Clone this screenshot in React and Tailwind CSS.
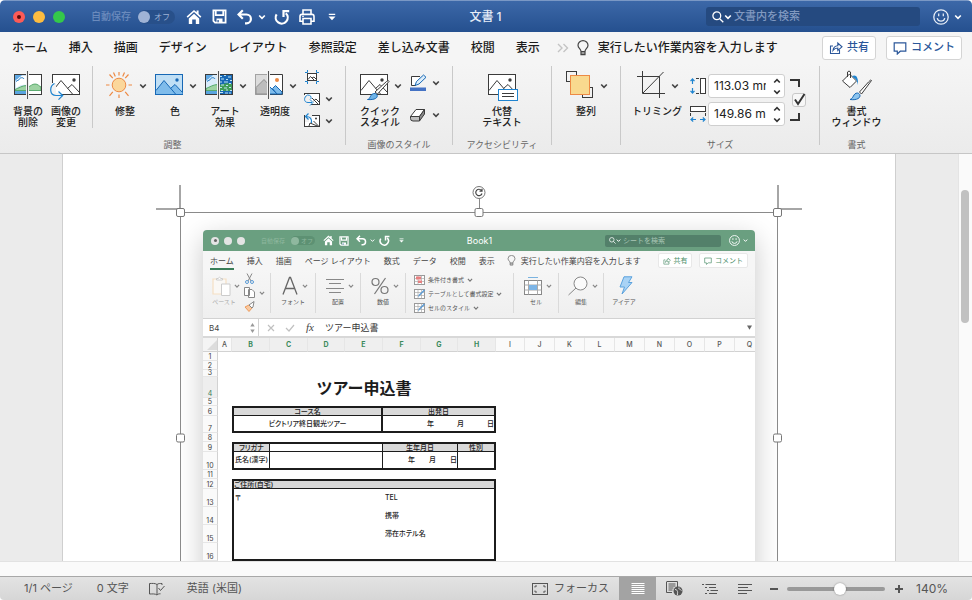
import React from "react";

const Chevron = ({ className = "size-2 text-[#444]" }) => (
  <svg viewBox="0 0 8 8" className={"shrink-0 " + className} fill="none" stroke="currentColor" strokeWidth="1.6" aria-hidden="true">
    <path d="M1.2 2.5 4 5.4l2.8-2.9" />
  </svg>
);

/* ---------- title bar icons ---------- */
const HomeIcon = ({ className }) => (
  <svg viewBox="0 0 16 16" className={className} fill="currentColor" aria-hidden="true">
    <path d="M.6 7.6 8 .9l2.6 2.3V1.6h2v3.5l2.8 2.5-1.1 1.2L8 3.1 1.7 8.8z" />
    <path d="M8 4.7 13.2 9.400V15H9.800v-4.400H6.200V15H2.800V9.400z" />
  </svg>
);
const SaveIcon = ({ className }) => (
  <svg viewBox="0 0 16 16" className={className} fill="none" stroke="currentColor" strokeWidth="1.9" aria-hidden="true">
    <path d="M1.500 1.500h13v13H3.200L1.500 12.800z" />
    <path d="M4 2v4.500h8V2" />
    <path d="M4.800 14v-3.800h6.400V14" fill="currentColor" stroke="none" />
    <path d="M6.500 11.800v2.200" stroke="#2d5896" strokeWidth="1.400" />
  </svg>
);
const UndoIcon = ({ className }) => (
  <svg viewBox="0 0 16 16" className={className} fill="none" stroke="currentColor" strokeWidth="2.200" aria-hidden="true">
    <path d="M5.800 1.200 1.500 5.500l4.300 4.300M1.800 5.500h7.700a4.400 4.400 0 0 1 0 8.800H8" />
  </svg>
);
const RedoIcon = ({ className }) => (
  <svg viewBox="0 0 16 16" className={className} fill="none" stroke="currentColor" strokeWidth="2.200" aria-hidden="true">
    <path d="M2.600 5.400a6 6 0 1 0 9.200-1.200" />
    <path d="M9.500 8V2.200h5.700" />
  </svg>
);
const PrintIcon = ({ className }) => (
  <svg viewBox="0 0 16 16" className={className} fill="none" stroke="currentColor" strokeWidth="1.6" aria-hidden="true">
    <path d="M4 5V1h8v4M3.500 12.200H1V7.500Q1 5.400 3 5.400h10q2 0 2 2.100v4.700h-2.500M4 9.500h8V15H4z" />
    <path d="M3.200 7.400h1.600" strokeWidth="1.200" />
  </svg>
);
const MoreIcon = ({ className }) => (
  <svg viewBox="0 0 8 8" className={className} fill="currentColor" aria-hidden="true">
    <path d="M.8.800h6.400v1.300H.8zM.5 3.500h7L4 7.200z" />
  </svg>
);
const SmileIcon = ({ className }) => (
  <svg viewBox="0 0 16 16" className={className} fill="none" stroke="currentColor" strokeWidth="1.300" aria-hidden="true">
    <circle cx="8" cy="8" r="7.200" />
    <path d="M5.700 4.600v2.600M10.300 4.600v2.600M4.200 9.200a3.900 3.900 0 0 0 7.600 0" />
  </svg>
);
const SearchIcon = ({ className }) => (
  <svg viewBox="0 0 12 12" className={className} fill="none" stroke="currentColor" strokeWidth="1.300" aria-hidden="true">
    <circle cx="4.800" cy="4.800" r="3.900" />
    <path d="m7.700 7.700 3.600 3.600" />
  </svg>
);
const BulbIcon = ({ className }) => (
  <svg viewBox="0 0 12 16" className={className} fill="none" stroke="currentColor" strokeWidth="1.200" aria-hidden="true">
    <path d="M4 11.500C4 9 1 8.300 1 5.200a5 4.600 0 0 1 10 0c0 3.100-3 3.800-3 6.300zM4 11.500v3.200h4v-3.200M4 13h4" />
  </svg>
);
const ShareIcon = ({ className }) => (
  <svg viewBox="0 0 14 14" className={className} fill="none" stroke="currentColor" strokeWidth="1.100" aria-hidden="true">
    <path d="M4 5H1.500v7.500h9V9" />
    <path d="M4 9.500c.3-3 2-4.700 4.800-4.800V2L13 5.800 8.800 9.500V7C6.800 7 5.200 7.800 4 9.500z" />
  </svg>
);
const CommentIcon = ({ className }) => (
  <svg viewBox="0 0 14 14" className={className} fill="none" stroke="currentColor" strokeWidth="1.200" aria-hidden="true">
    <path d="M1.200 1.800h11.600v8.400H7.300l-3 2.800v-2.800H1.200z" />
  </svg>
);

/* ---------- ribbon icons, 32 x 40 ---------- */
const Big = ({ children, w = 32 }) => (
  <svg viewBox={"0 0 " + w + " 40"} width={w} height="40" className="shrink-0" fill="none" aria-hidden="true">
    {children}
  </svg>
);
const Frame = ({ stroke = "#3b3b3b", fill = "#fff" }) => <rect x="2.500" y="8.500" width="27" height="20" fill={fill} stroke={stroke} />;
const Mountains = ({ stroke = "#3b3b3b" }) => (
  <g stroke={stroke}>
    <path d="M3 24.500 11 14.500 22.500 28M17.500 22.500 22 18.500 29.500 26.500" />
    <circle cx="24" cy="14" r="1.700" fill={stroke} stroke="none" />
  </g>
);
const RemoveBgIcon = () => (
  <Big>
    <Frame />
    <rect x="3" y="9" width="12" height="19" fill="#cfe5f7" />
    <path d="M4 15c1-3 4-3 5-5h6v9c-4-1-7 0-11 3z" fill="#fff" />
    <path d="M4 15.500c1.500-1.500 3-1 3.500-2.500S11 11 12 13" stroke="#1a76c4" />
    <path d="M3 9h7c-1 2-3 1.500-3.500 3S4 13 3 15z" fill="#60a8e3" />
    <path d="M3 23.500c4-1.500 7-4 12-4v5H3zM16 21c3-1 4-3 7-3s4 2 6 3v3.500H16z" fill="#9ed3a3" stroke="#3f9c57" strokeWidth=".8" />
    <path d="M3 25h12v3.500H3z" fill="#5aa5e0" />
    <rect x="2.500" y="8.500" width="27" height="20" stroke="#3b3b3b" />
    <path d="M15.500 5v28" stroke="#f0f0f0" strokeWidth="3" />
    <path d="M15.500 5v28" stroke="#555" />
  </Big>
);
const ChangePicIcon = () => (
  <Big>
    <Frame />
    <Mountains />
    <path d="M0 17h6v10h5v5H0z" fill="#f2f2f2" />
    <path d="M4.500 17.500C-1 20.500-.5 29.500 6 29.500h6.500M8.500 25.500l4.200 4-4.200 4.200" stroke="#1f84d0" strokeWidth="1.200" />
  </Big>
);
const SunIcon = () => (
  <Big>
    <circle cx="16" cy="19" r="6.800" fill="#fbd79b" stroke="#ed8a45" />
    <path d="M16 9.500V6M16 28.500V32M6.500 19H3M25.500 19H29M9.800 12.200 6.500 8.500M22.200 12.200l3.300-3.700M9.800 25.800l-3.300 4M22.200 25.800l3.300 4M12.300 10.600 10.500 6.500M19.700 10.600l1.800-4.100" stroke="#ed8a45" strokeWidth="1.200" />
  </Big>
);
const ColorIcon = () => (
  <Big>
    <Frame fill="#c0dff5" stroke="#1768b5" />
    <path d="M3 24.500 11 14.500 17.500 22 22 18.500l7.500 8V28H3z" fill="#7fbceb" />
    <Mountains stroke="#1768b5" />
  </Big>
);
const ArtIcon = () => (
  <Big>
    <Frame />
    <rect x="3" y="9" width="12" height="19" fill="#d9ebf9" />
    <path d="M3 9h7c-1 2-3 1.500-3.500 3S4 13 3 15z" fill="#60a8e3" />
    <path d="M4 15.500c1.500-1.500 3-1 3.500-2.500S11 11 12 13" stroke="#1a76c4" />
    <path d="M3 22.500c4-1.500 7-4 12-4v6H3z" fill="#9ed3a3" stroke="#3f9c57" strokeWidth=".8" />
    <path d="M3 25h12v3.500H3z" fill="#5aa5e0" />
    <rect x="16" y="9" width="13" height="19" fill="#1768b5" />
    <path d="M16 19c4-1 8-3 13-1v7H16z" fill="#3f9c57" />
    <path d="M17 10.500h2M21 9.500h2M25 11h3M18 13h3M23 13.500h2M27 14.500h2M17 16h2M21 16h4M26 17.500h2M18 19h3M23 19.500h2M17 21.500h2M21 22h3M26 21.500h2M18 24.500h2M23 24h2M27 24.500h2M17 26.500h3M22 27h3M26 27h2" stroke="#bfe3f2" />
    <rect x="2.500" y="8.500" width="27" height="20" stroke="#3b3b3b" />
    <path d="M15.500 5v28" stroke="#f0f0f0" strokeWidth="3" />
    <path d="M15.500 5v28" stroke="#555" />
  </Big>
);
const TransparencyIcon = () => (
  <Big>
    <rect x="2.500" y="8.500" width="13" height="20" fill="#dcdcdc" stroke="#a3a3a3" />
    <path d="M3 21.500 11 13.500l4.500 5V28H3z" fill="#bdbdbd" stroke="#8e8e8e" />
    <path d="M16 8.500h13.500v20H16" fill="#fff" stroke="#3b3b3b" />
    <path d="m16 20 8 8h-8z" fill="#7fbceb" stroke="#1768b5" />
    <path d="m19.500 22.500 3-3 6.500 6.500v2h-5z" fill="#7fbceb" stroke="#1768b5" />
    <circle cx="24" cy="14" r="2" fill="#ed8a45" />
    <path d="M15.500 5v28" stroke="#f0f0f0" strokeWidth="3" />
    <path d="M15.500 5v28" stroke="#555" />
  </Big>
);
const QuickStyleIcon = () => (
  <Big>
    <Frame />
    <Mountains />
    <path d="M31 15.500 19.500 28l-2.500-2 11.500-10.500q2.500-1.800 2.500 0z" fill="#fff" stroke="#3b3b3b" />
    <path d="M9.500 33.500c3 0 2.500-6.500 7.500-6 4 1 3.500 7-7.500 6z" fill="#6fb4e8" stroke="#1768b5" />
  </Big>
);
const AltTextIcon = () => (
  <Big w={36}>
    <g transform="translate(2 0)">
      <Frame />
      <Mountains />
      <rect x="12.500" y="23.500" width="19" height="11" fill="#fff" stroke="#1f84d0" />
      <path d="M16 27.500h12M16 30.500h12" stroke="#3b3b3b" />
    </g>
  </Big>
);
const ArrangeIcon = () => (
  <Big>
    <rect x="2.500" y="5.500" width="10" height="10" stroke="#3b3b3b" />
    <rect x="18.500" y="21.500" width="10" height="10" stroke="#3b3b3b" />
    <rect x="6.500" y="9.500" width="19" height="19" fill="#f9d98f" stroke="#ed8a45" />
  </Big>
);
const CropIcon = () => (
  <Big>
    <path d="M7.500 5v22.500H30M2 10.500h22.500V32M8 27 28.500 6" stroke="#3b3b3b" />
  </Big>
);
const FormatPaneIcon = () => (
  <Big>
    <path d="M1.500 15 8.500 8l7 7-6.500 6.500z" fill="#fff" stroke="#3b3b3b" />
    <path d="M6.500 11V6q1.500-2 3 0v6" stroke="#3b3b3b" />
    <path d="M11 10c4-2 6.500 1 6 9-1-4-1.500-6-4-7z" fill="#1f84d0" />
    <path d="M30.500 14.500 20.500 28l-2-2 9-10q2.500-3 3-1.500z" fill="#fff" stroke="#3b3b3b" />
    <path d="M9 33.500c3.500-.5 3-6.500 7.500-6.500 4.500 1 3.500 8-7.500 6.500z" fill="#8cc4ee" stroke="#1768b5" />
  </Big>
);

const CompressIcon = () => (
  <svg viewBox="0 0 16 16" className="size-4" fill="none" aria-hidden="true">
    <rect x="3.500" y="4.500" width="9" height="7" fill="#fff" stroke="#3b3b3b" />
    <path d="m4 10.500 2.500-3 4 4M8 9l2-1 2 2" stroke="#3b3b3b" />
    <path d="M1 3.500h2.500V1M15 3.500h-2.500V1M1 12.500h2.500V15M15 12.500h-2.500V15" stroke="#1f84d0" />
  </svg>
);
const SwapIcon = () => (
  <svg viewBox="0 0 16 16" className="size-4" fill="none" aria-hidden="true">
    <rect x=".5" y="2.500" width="15" height="11" fill="#fff" stroke="#3b3b3b" />
    <path d="m8 7 6.500 6.500M9.500 10 12 8l3 3" stroke="#3b3b3b" />
    <path d="M0 4h7v10H0z" fill="#f0f0f0" />
    <path d="M3.500 4C-.5 6-.5 11.500 4 11.500h4M6 8.500l3 3-3 3M3.500 4c3 0 4 1.500 3.500 4" stroke="#1f84d0" />
  </svg>
);
const ResetIcon = () => (
  <svg viewBox="0 0 16 16" className="size-4" fill="none" aria-hidden="true">
    <rect x=".5" y="2.500" width="15" height="11" fill="#fff" stroke="#3b3b3b" />
    <path d="m5 13 1-3 8.500 3.500M9.500 8l5 5" stroke="#3b3b3b" />
    <circle cx="12" cy="5.500" r="1" fill="#3b3b3b" />
    <path d="M1 1h7v5H5v3H1z" fill="#f0f0f0" />
    <path d="M4.500.5 1.500 3.500l3 3M2 3.500c4 0 6 2 5.500 6.500" stroke="#1f84d0" strokeWidth="1.200" />
  </svg>
);
const PenIcon = () => (
  <svg viewBox="0 0 20 20" className="size-5" fill="none" aria-hidden="true">
    <path d="M12 3.500H3.500v9H8" fill="#fff" stroke="#3b3b3b" />
    <path d="m7 12.500 1.500-4 7-6.500 2.500 2.300-7 6.700z" fill="#dcedfa" stroke="#1768b5" />
    <path d="M2 14.500h16V18H2z" fill="#4472c4" />
  </svg>
);
const EffectsIcon = () => (
  <svg viewBox="0 0 20 20" className="size-5" fill="none" stroke="#3b3b3b" aria-hidden="true">
    <path d="M2.500 11.500 8 4.500h8.500l-5 7z" fill="#fff" />
    <path d="M2.500 11.500h9V16H5q-2.500 0-2.500-2.500z" fill="#bdbdbd" />
    <path d="m11.500 11.500 5-7v4.500l-5 7z" fill="#8a8a8a" />
  </svg>
);
const HeightIcon = () => (
  <svg viewBox="0 0 16 16" className="size-4" fill="none" aria-hidden="true">
    <path d="M2.500 1v5M2.500 10v5M.5 3.200l2-2.200 2 2.200M.5 12.800l2 2.200 2-2.200" stroke="#1f84d0" strokeWidth="1.200" />
    <path d="M6 .5h3M6 15.500h3" stroke="#3b3b3b" />
    <rect x="10.500" y=".5" width="5" height="15" fill="#fff" stroke="#3b3b3b" />
  </svg>
);
const WidthIcon = () => (
  <svg viewBox="0 0 16 16" className="size-4" fill="none" aria-hidden="true">
    <path d="M1 13.500h5M10 13.500h5M3.200 11.500 1 13.500l2.200 2M12.800 11.500l2.200 2-2.200 2" stroke="#1f84d0" strokeWidth="1.200" />
    <path d="M.5 7v3M15.500 7v3" stroke="#3b3b3b" />
    <rect x=".5" y=".5" width="15" height="5" fill="#fff" stroke="#3b3b3b" />
  </svg>
);

/* ---------- ribbon building blocks ---------- */
const Sep = ({ short }) => <div className={short ? "h-[62px] w-px shrink-0 bg-[#c9c9c9]" : "h-[79px] w-px shrink-0 bg-[#c9c9c9]"} />;

const Tool = ({ icon, label, menu, className = "" }) => (
  <button type="button" className={"flex shrink-0 flex-col items-center text-[10px] leading-[11px] font-medium whitespace-pre text-[#222] " + (menu ? "w-[50px] " : "") + className}>
    <span className={menu ? "flex w-full items-center gap-1 pl-[3px]" : "flex"}>
      {icon}
      {menu && <Chevron />}
    </span>
    {label}
  </button>
);

const Group = ({ label, className, children }) => (
  <section className={"flex shrink-0 flex-col " + className}>
    <div className="flex h-[73px] items-start">{children}</div>
    <div className="text-center text-[9px] leading-[11px] text-[#666]">{label}</div>
  </section>
);

const SmallTool = ({ icon, label, menu, className }) => (
  <button type="button" aria-label={label} className={"flex items-center " + className}>
    {icon}
    {menu && <Chevron />}
  </button>
);

const SizeField = ({ label, icon, value }) => (
  <div className="flex items-center gap-[2px]">
    {icon}
    <div className="flex h-6 w-[77px] items-center rounded-[3px] border border-[#cfcfcf] bg-white pl-[5px]">
      <input aria-label={label} defaultValue={value} className="w-[52px] min-w-0 bg-transparent text-xs text-[#222] outline-none" />
      <div className="ml-[7px] flex flex-col">
        <button type="button" aria-label={label + "を増やす"} className="flex h-[11px] items-center">
          <Chevron className="size-2 rotate-180 text-[#333]" />
        </button>
        <button type="button" aria-label={label + "を減らす"} className="flex h-[11px] items-center">
          <Chevron className="size-2 text-[#333]" />
        </button>
      </div>
    </div>
  </div>
);

const TitleBar = () => (
  <header className="flex h-8 shrink-0 items-center border-t border-[#7a98c5] bg-gradient-to-b from-[#3c68a8] to-[#25508f] text-white">
    <div className="flex flex-1 basis-0 items-center pl-[13px]">
      <div className="flex gap-2">
        <button type="button" aria-label="閉じる" className="flex size-3 items-center justify-center rounded-full bg-[#fc5b57]">
          <span className="size-1 rounded-full bg-[#5c0b09]" />
        </button>
        <button type="button" aria-label="しまう" className="size-3 rounded-full bg-[#fdbc40]" />
        <button type="button" aria-label="拡大" className="size-3 rounded-full bg-[#34c84a]" />
      </div>
      <span className="ml-[26px] text-[10px] font-medium text-[#6b8bbd]">自動保存</span>
      <button type="button" role="switch" aria-checked="false" className="ml-[7px] flex h-[14px] w-[37px] items-center gap-1 rounded-full bg-[#28508a] text-[8px] text-[#9db3d6]">
        <span className="size-3 rounded-full bg-[#9fb3d6]" />
        オフ
      </button>
      <button type="button" aria-label="ホーム" className="ml-[11px]"><HomeIcon className="size-4" /></button>
      <button type="button" aria-label="保存" className="ml-[10px]"><SaveIcon className="size-[15px]" /></button>
      <button type="button" aria-label="元に戻す" className="ml-[10px] flex items-center gap-[5px]">
        <UndoIcon className="size-4" />
        <Chevron className="size-2 text-white" />
      </button>
      <button type="button" aria-label="やり直し" className="ml-2"><RedoIcon className="size-4" /></button>
      <button type="button" aria-label="印刷" className="ml-[9px]"><PrintIcon className="size-4" /></button>
      <button type="button" aria-label="カスタマイズ" className="ml-[13px]"><MoreIcon className="size-2" /></button>
    </div>
    <h1 className="pr-1 text-xs font-medium text-[#e6edf7]">文書 1</h1>
    <div className="flex flex-1 basis-0 items-center justify-end pr-[10px]">
      <label className="flex h-[19px] w-[214px] items-center rounded-[3px] bg-[#254a80] pl-[6px]">
        <SearchIcon className="size-3" />
        <Chevron className="size-2 text-white" />
        <input aria-label="文書内を検索" placeholder="文書内を検索" className="ml-[2px] min-w-0 flex-1 bg-transparent text-[11px] font-medium outline-none placeholder:text-[#8199c0]" />
      </label>
      <button type="button" aria-label="フィードバック" className="ml-[13px] flex items-center gap-[5px] text-[#e6edf7]">
        <SmileIcon className="size-4" />
        <Chevron className="size-2 text-white" />
      </button>
    </div>
  </header>
);

const tabs = ["ホーム", "挿入", "描画", "デザイン", "レイアウト", "参照設定", "差し込み文書", "校閲", "表示"];

const TabRow = () => (
  <nav className="flex h-[31px] shrink-0 items-center bg-[#f5f5f5] pr-[10px] pl-3 text-xs font-medium text-[#1c1c1c]">
    <div className="flex gap-[21px] whitespace-nowrap">
      {tabs.map((t) => (
        <button key={t} type="button">{t}</button>
      ))}
    </div>
    <button type="button" aria-label="その他のタブ" className="ml-[17px] text-[#c4c4c4]">
      <svg viewBox="0 0 12 10" className="h-[10px] w-3" fill="none" stroke="currentColor" strokeWidth="1.400" aria-hidden="true">
        <path d="m1 1 4 4-4 4M6.500 1l4 4-4 4" />
      </svg>
    </button>
    <button type="button" className="ml-2 flex items-center gap-[9px] whitespace-nowrap">
      <BulbIcon className="h-4 w-3 text-[#444]" />
      実行したい作業内容を入力します
    </button>
    <div className="ml-auto flex gap-[10px] text-[11px] whitespace-nowrap text-[#2b579a]">
      <button type="button" className="flex h-6 w-[54px] items-center justify-center gap-1 rounded-[3px] border border-[#d4d4d4] bg-white">
        <ShareIcon className="size-[14px]" />
        共有
      </button>
      <button type="button" className="flex h-6 w-[76px] items-center justify-center gap-1 rounded-[3px] border border-[#d4d4d4] bg-white">
        <CommentIcon className="size-[14px]" />
        コメント
      </button>
    </div>
  </nav>
);

const Ribbon = () => (
  <div className="flex h-[91px] shrink-0 items-start overflow-hidden border-b border-[#c6c6c6] bg-gradient-to-b from-[#f5f5f5] to-[#ebebeb] pt-[3px]">
    <Group label="調整" className="w-[345px]">
      <Tool className="ml-[9px] w-[38px]" icon={<RemoveBgIcon />} label={"背景の\n削除"} />
      <Tool className="w-[38px]" icon={<ChangePicIcon />} label={"画像の\n変更"} />
      <div className="mx-[7px]"><Sep short /></div>
      <Tool menu icon={<SunIcon />} label="修整" />
      <Tool menu icon={<ColorIcon />} label="色" />
      <Tool menu icon={<ArtIcon />} label={"アート\n効果"} />
      <Tool menu icon={<TransparencyIcon />} label="透明度" />
      <div className="ml-1 flex flex-col">
        <SmallTool className="h-[22px]" icon={<CompressIcon />} label="図の圧縮" />
        <SmallTool className="h-[22px] gap-[5px]" menu icon={<SwapIcon />} label="図の変更" />
        <SmallTool className="h-[22px] gap-[5px]" menu icon={<ResetIcon />} label="図のリセット" />
      </div>
    </Group>
    <Sep />
    <Group label="画像のスタイル" className="w-[106px]">
      <Tool menu className="ml-[9px]" icon={<QuickStyleIcon />} label={"クイック\nスタイル"} />
      <div className="ml-[3px] flex flex-col pt-px">
        <SmallTool className="h-8 gap-1" menu icon={<PenIcon />} label="図の枠線" />
        <SmallTool className="h-8 gap-1" menu icon={<EffectsIcon />} label="図の効果" />
      </div>
    </Group>
    <Sep />
    <Group label="アクセシビリティ" className="w-[98px]">
      <Tool className="mx-auto" icon={<AltTextIcon />} label={"代替\nテキスト"} />
    </Group>
    <Sep />
    <Group label="" className="w-[68px]">
      <Tool menu className="ml-[9px]" icon={<ArrangeIcon />} label="整列" />
    </Group>
    <Sep />
    <Group label="サイズ" className="w-[198px]">
      <Tool menu className="ml-[11px]" icon={<CropIcon />} label="トリミング" />
      <div className="ml-2 flex flex-col gap-1 pt-2">
        <SizeField label="高さ" icon={<HeightIcon />} value="113.03 mm" />
        <SizeField label="幅" icon={<WidthIcon />} value="149.86 mm" />
      </div>
      <div className="ml-[5px] flex flex-col items-start pt-[13px]">
        <span className="h-2 w-[10px] border-t-2 border-r-2 border-[#333]" />
        <label className="relative mt-[6px] mb-[6px] ml-[2px] block size-[14px]">
          <input type="checkbox" defaultChecked aria-label="縦横比を固定" className="block size-[14px] appearance-none rounded-[3px] border border-[#c8c8c8] bg-[#f7f7f7]" />
          <svg viewBox="0 0 14 14" className="pointer-events-none absolute inset-0" fill="none" stroke="#333" strokeWidth="2" aria-hidden="true">
            <path d="m3 6.500 3 4.500 6.500-10" />
          </svg>
        </label>
        <span className="h-2 w-[10px] border-r-2 border-b-2 border-[#333]" />
      </div>
    </Group>
    <Sep />
    <Group label="書式" className="w-[73px]">
      <Tool className="mx-auto" icon={<FormatPaneIcon />} label={"書式\nウィンドウ"} />
    </Group>
  </div>
);

/* ---------- embedded spreadsheet window ---------- */
const MiniSep = () => <div className="h-10 w-px shrink-0 bg-[#dadada]" />;
const MiniTool = ({ icon, label, menu = true, className = "w-11" }) => (
  <button type="button" className={"flex shrink-0 flex-col items-center text-[6px] leading-[8px] text-[#555] " + className}>
    <span className="flex h-[25px] items-center gap-1 pl-1">
      {icon}
      {menu && <Chevron className="size-[6px] text-[#888]" />}
    </span>
    {label}
  </button>
);
const MiniGrid = ({ accent, fill }) => (
  <svg viewBox="0 0 11 10" className="h-[10px] w-[11px]" fill="none" aria-hidden="true">
    <rect x=".5" y=".5" width="10" height="9" fill="#fff" stroke="#999" />
    <path d="M.5 3.500h10M.5 6.500h10M4 .5v9M7.500.5v9" stroke="#aaa" strokeWidth=".7" />
    <path d={accent === "rule" ? "M2 1.500h5v3H2zM4 5.500h4v2.500H4z" : "m4 8.500 1-3 5-5 1 1-5 5z"} fill={fill} />
  </svg>
);

const MiniTitle = () => (
  <div className="flex h-[21px] items-center bg-[#6a9f80] text-white">
    <div className="flex flex-1 basis-0 items-center pl-2">
      <div className="flex gap-[5px]">
        <span className="flex size-2 items-center justify-center rounded-full bg-[#e4e4e4]"><span className="size-[3px] rounded-full bg-[#666]" /></span>
        <span className="size-2 rounded-full bg-[#e4e4e4]" />
        <span className="size-2 rounded-full bg-[#e4e4e4]" />
      </div>
      <span className="ml-4 text-[6px] text-[#8fb89f]">自動保存</span>
      <span className="ml-[6px] flex h-[9px] w-6 items-center gap-[2px] rounded-full bg-[#5d9173] text-[6px] text-[#8fb89f]">
        <span className="size-2 rounded-full bg-[#8fb89f]" />オフ
      </span>
      <HomeIcon className="ml-2 size-[11px]" />
      <SaveIcon className="ml-[5px] size-[10px]" />
      <UndoIcon className="ml-[7px] size-[11px]" />
      <Chevron className="ml-[3px] size-[5px] text-white" />
      <RedoIcon className="ml-1 size-[11px]" />
      <MoreIcon className="ml-[9px] size-[5px]" />
    </div>
    <span className="text-[9px] leading-none">Book1</span>
    <div className="flex flex-1 basis-0 items-center justify-end pr-[7px]">
      <label className="flex h-3 w-[116px] items-center rounded-[2px] bg-[#53806a] pl-1">
        <SearchIcon className="size-[7px]" />
        <Chevron className="size-[5px] text-white" />
        <input aria-label="シートを検索" placeholder="シートを検索" className="ml-[2px] h-3 min-w-0 flex-1 bg-transparent text-[7px] leading-[12px] outline-none placeholder:text-[#a9c6b5]" />
      </label>
      <SmileIcon className="ml-2 size-[11px]" />
      <Chevron className="ml-[3px] size-[5px] text-white" />
    </div>
  </div>
);

const miniTabs = ["挿入", "描画", "ページ レイアウト", "数式", "データ", "校閲", "表示"];

const MiniTabs = () => (
  <div className="flex h-[19px] items-center bg-[#f6f6f6] pr-[7px] pl-[7px] text-[8px] leading-none whitespace-nowrap text-[#444]">
    <div className="flex gap-[13px]">
      <button type="button" className="border-b-2 border-[#3a7d58] pt-[5px] pb-[3px]">ホーム</button>
      {miniTabs.map((t) => (
        <button key={t} type="button">{t}</button>
      ))}
    </div>
    <BulbIcon className="ml-3 h-[11px] w-[9px] text-[#777]" />
    <span className="ml-[5px]">実行したい作業内容を入力します</span>
    <div className="ml-auto flex gap-[7px] text-[7px] text-[#4e8f6b]">
      <button type="button" className="flex h-[15px] w-[34px] items-center justify-center gap-[3px] rounded-[2px] border border-[#e8e8e8] bg-white"><ShareIcon className="size-2" />共有</button>
      <button type="button" className="flex h-[15px] w-[49px] items-center justify-center gap-[3px] rounded-[2px] border border-[#e8e8e8] bg-white"><CommentIcon className="size-2" />コメント</button>
    </div>
  </div>
);

const MiniRibbon = () => (
  <div className="flex h-[49px] items-start border-b border-[#d2d2d2] bg-gradient-to-b from-[#f6f6f6] to-[#efefef] pt-[3px]">
    <div className="flex w-[67px] shrink-0">
      <button type="button" className="ml-[7px] flex w-7 flex-col items-center text-[6px] leading-[8px] text-[#aaa]">
        <span className="flex h-[25px] items-center gap-[3px] pl-1">
          <svg viewBox="0 0 19 20" className="h-5 w-[19px]" fill="none" aria-hidden="true">
            <path d="M1 3h13v15H1z" fill="#faf8f5" stroke="#f5dfc4" strokeWidth="1.200" />
            <path d="M4.500 4V2.500h1.500q1.500-2.500 3 0h1.500V4z" fill="#fff" stroke="#ccc" />
            <path d="M9.500 8h8.500v11.500H9.500z" fill="#fff" stroke="#ccc" />
          </svg>
          <Chevron className="size-[6px] text-[#888]" />
        </span>
        ペースト
      </button>
      <div className="ml-[6px] flex flex-col gap-[3px]">
        <svg viewBox="0 0 11 11" className="size-[11px]" fill="none" aria-hidden="true">
          <path d="m3 .5 4 7.500M8 .5 4 8" stroke="#888" />
          <circle cx="3" cy="9" r="1.500" stroke="#5b9bd5" />
          <circle cx="8" cy="9" r="1.500" stroke="#5b9bd5" />
        </svg>
        <span className="flex items-center gap-1">
          <svg viewBox="0 0 11 11" className="size-[11px]" fill="#fff" stroke="#888" aria-hidden="true">
            <path d="M.5.500h5v8h-5zM4.500 2.500H8l2.500 2.500v5.500h-6z" />
          </svg>
          <Chevron className="size-[6px] text-[#888]" />
        </span>
        <svg viewBox="0 0 11 11" className="size-[11px]" fill="none" aria-hidden="true">
          <path d="m1 6 4-2 3 3-3 3.500z" fill="#f9c9a0" stroke="#ed9a5a" />
          <path d="M5 4 10 .5 9 6 8 7z" fill="#fff" stroke="#888" />
        </svg>
      </div>
    </div>
    <MiniSep />
    <MiniTool label="フォント" icon={<svg viewBox="0 0 16 20" className="h-5 w-4" fill="none" stroke="#666" strokeWidth="1.300" aria-hidden="true"><path d="M1 18.500 7.500 1.500h1L15 18.500M3.500 12.500h9" /></svg>} />
    <MiniSep />
    <MiniTool label="配置" icon={<svg viewBox="0 0 18 16" className="h-4 w-[18px]" fill="none" stroke="#888" aria-hidden="true"><path d="M0 1.500h18M3 5.500h12M0 10.500h18M3 14.500h12" /></svg>} />
    <MiniSep />
    <MiniTool label="数値" icon={<svg viewBox="0 0 18 18" className="size-[18px]" fill="none" stroke="#777" strokeWidth="1.200" aria-hidden="true"><circle cx="4.500" cy="5" r="3.500" /><circle cx="13.500" cy="13" r="3.500" /><path d="M14.500 1 3.500 17" /></svg>} />
    <MiniSep />
    <div className="flex w-[107px] shrink-0 flex-col pl-2 text-[6px] leading-none whitespace-nowrap text-[#555]">
      <button type="button" className="flex h-[14px] items-center gap-[3px]"><MiniGrid accent="rule" fill="#e88080" />条件付き書式<Chevron className="size-[6px] text-[#777]" /></button>
      <button type="button" className="flex h-[14px] items-center gap-[3px]"><MiniGrid fill="#5b9bd5" />テーブルとして書式設定<Chevron className="size-[6px] text-[#777]" /></button>
      <button type="button" className="flex h-[14px] items-center gap-[3px]"><MiniGrid fill="#5b9bd5" />セルのスタイル<Chevron className="size-[6px] text-[#777]" /></button>
    </div>
    <MiniSep />
    <MiniTool label="セル" icon={<svg viewBox="0 0 18 20" className="h-5 w-[18px]" fill="none" aria-hidden="true"><path d="M4 1.500h10" stroke="#7ab3e0" /><rect x=".5" y="4.500" width="17" height="14" fill="#fff" stroke="#888" /><path d="M.5 9h17M.5 14h17M4.500 4.500v14M13.500 4.500v14" stroke="#aaa" /><rect x="5" y="9" width="8" height="5" fill="#7db5e6" /></svg>} />
    <MiniSep />
    <MiniTool label="編集" icon={<svg viewBox="0 0 20 20" className="size-5" fill="none" stroke="#888" aria-hidden="true"><circle cx="12.500" cy="7.500" r="6.500" fill="#fbfbfb" /><path d="m8 12-7.500 7" /></svg>} />
    <MiniSep />
    <MiniTool menu={false} className="w-10" label="アイデア" icon={<svg viewBox="0 0 14 19" className="h-[19px] w-[14px]" fill="#a9d3f5" stroke="#5ba2dd" aria-hidden="true"><path d="M5 .8h8L9.500 6.500H13L3 18l2.500-7H1z" /></svg>} />
  </div>
);

const FormulaBar = () => (
  <div className="flex h-[19px] items-start border-b-2 border-[#d8d8d8] bg-white text-[#444]">
    <div className="flex h-[17px] w-[56px] items-center justify-between border-r border-[#d2d2d2] pr-[3px] pl-[6px] text-[8px]">
      B4
      <svg viewBox="0 0 5 12" className="h-3 w-[5px]" fill="#999" aria-hidden="true"><path d="M.3 4.500 2.500 1l2.200 3.500zM.3 7.500h4.400L2.500 11z" /></svg>
    </div>
    <div className="flex h-[17px] flex-1 items-center pl-2">
      <svg viewBox="0 0 8 8" className="size-2" fill="none" stroke="#c0c0c0" strokeWidth="1.200" aria-hidden="true"><path d="m1 1 6 6M7 1 1 7" /></svg>
      <svg viewBox="0 0 10 8" className="ml-[10px] h-2 w-[10px]" fill="none" stroke="#c0c0c0" strokeWidth="1.200" aria-hidden="true"><path d="m1 4 3 3 5-6" /></svg>
      <span className="ml-[11px] w-[19px] [font-family:'Liberation_Serif',serif] text-[11px] leading-none italic">fx</span>
      <span className="text-[9px] leading-none text-[#333]">ツアー申込書</span>
      <svg viewBox="0 0 5 5" className="mr-[3px] ml-auto size-[5px]" fill="#666" aria-hidden="true"><path d="M0 .5h5L2.500 4.800z" /></svg>
    </div>
  </div>
);

const columns = [
  ["A", "w-[14px]"], ["B", "w-[38px]"], ["C", "w-[38px]"], ["D", "w-[37px]"], ["E", "w-[38px]"],
  ["F", "w-[38px]"], ["G", "w-[37px]"], ["H", "w-[38px]"], ["I", "w-[29px]"], ["J", "w-[30px]"],
  ["K", "w-[30px]"], ["L", "w-[30px]"], ["M", "w-[30px]"], ["N", "w-[30px]"], ["O", "w-[30px]"],
  ["P", "w-[30px]"], ["Q", "w-[30px]"],
];

const Row = ({ n, h, active, children }) => (
  <tr className={h}>
    <th scope="row" className={"border-r border-b border-r-[#d2d2d2] border-b-[#e6e6e6] p-0 text-center align-bottom text-[7px] leading-[6px] font-normal " + (active ? "bg-[#eee] font-bold text-[#3a7d58]" : "bg-[#fafafa] text-[#444]")}>{n}</th>
    {children || <td colSpan={17} />}
  </tr>
);

const shade = "bg-[#d9d9d9] ";
const edge = "border-[#1c1c1c] ";

const Sheet = () => (
  <table className="w-[531px] table-fixed border-separate border-spacing-0 bg-white text-[7px] leading-[8px] font-medium text-[#222] [font-feature-settings:'palt'] [&_td]:p-0">
    <colgroup>
      <col className="w-[15px]" />
      {columns.map(([c, w]) => <col key={c} className={w} />)}
    </colgroup>
    <thead>
      <tr className="h-[14px]">
        <th className="border-r border-b border-[#d2d2d2] bg-[#f4f4f4] p-0">
          <svg viewBox="0 0 10 10" className="ml-auto size-[10px]" fill="#dcdcdc" aria-hidden="true"><path d="M10 0v10H0z" /></svg>
        </th>
        {columns.map(([c]) => (
          <th key={c} scope="col" className={"border-b border-b-[#d2d2d2] border-r border-r-[#e6e6e6] p-0 text-[7px] " + ("BCDEFGH".includes(c) ? "bg-[#efefef] font-bold text-[#3a8a5c]" : "bg-[#fafafa] font-medium text-[#555]")}>{c}</th>
        ))}
      </tr>
    </thead>
    <tbody>
      <Row n="1" h="h-[9px]" />
      <Row n="2" h="h-[9px]" />
      <Row n="3" h="h-[7px]" />
      <Row n="4" h="h-[21px]" active>
        <td />
        <td colSpan={7} className="text-center text-[16px] leading-[20px] font-bold text-[#1c1c1c] [font-feature-settings:normal]">ツアー申込書</td>
        <td colSpan={9} />
      </Row>
      <Row n="5" h="h-[8px]" />
      <Row n="6" h="h-[10px]">
        <td />
        <td colSpan={4} className={edge + shade + "border-t-2 border-r-2 border-b border-l-2 text-center leading-[7px]"}>コース名</td>
        <td colSpan={3} className={edge + shade + "border-t-2 border-r-2 border-b text-center leading-[7px]"}>出発日</td>
        <td colSpan={9} />
      </Row>
      <Row n="7" h="h-[17px]">
        <td />
        <td colSpan={4} className={edge + "border-r-2 border-b-2 border-l-2 text-center"}>ビクトリア終日観光ツアー</td>
        <td colSpan={3} className={edge + "border-r-2 border-b-2"}><div className="flex justify-end gap-[23px]"><span>年</span><span>月</span><span>日</span></div></td>
        <td colSpan={9} />
      </Row>
      <Row n="8" h="h-[9px]" />
      <Row n="9" h="h-[10px]">
        <td />
        <td className={edge + shade + "border-t-2 border-r border-b border-l-2 text-center leading-[7px]"}>フリガナ</td>
        <td colSpan={3} className={edge + "border-t-2 border-r border-b"} />
        <td colSpan={2} className={edge + shade + "border-t-2 border-r border-b text-center leading-[7px]"}>生年月日</td>
        <td className={edge + shade + "border-t-2 border-r-2 border-b text-center leading-[7px]"}>性別</td>
        <td colSpan={9} />
      </Row>
      <Row n="10" h="h-[18px]">
        <td />
        <td className={edge + "border-r border-b-2 border-l-2 text-center whitespace-nowrap"}>氏名(漢字)</td>
        <td colSpan={3} className={edge + "border-r border-b-2"} />
        <td colSpan={2} className={edge + "border-r border-b-2"}><div className="flex justify-end gap-[14px]"><span>年</span><span>月</span><span>日</span></div></td>
        <td className={edge + "border-r-2 border-b-2"} />
        <td colSpan={9} />
      </Row>
      <Row n="11" h="h-[9px]" />
      <Row n="12" h="h-[10px]">
        <td />
        <td colSpan={7} className={edge + shade + "border-t-2 border-r-2 border-b border-l-2 leading-[7px]"}>ご住所(自宅)</td>
        <td colSpan={9} />
      </Row>
      <Row n="13" h="h-[18px]">
        <td />
        <td colSpan={4} className={edge + "border-l-2"}><span className="pl-px">〒</span></td>
        <td colSpan={3} className={edge + "border-r-2"}><span className="pl-[2px]">TEL</span></td>
        <td colSpan={9} />
      </Row>
      <Row n="14" h="h-[18px]">
        <td />
        <td colSpan={4} className={edge + "border-l-2"} />
        <td colSpan={3} className={edge + "border-r-2"}><span className="pl-[2px]">携帯</span></td>
        <td colSpan={9} />
      </Row>
      <Row n="15" h="h-[18px]">
        <td />
        <td colSpan={4} className={edge + "border-l-2"} />
        <td colSpan={3} className={edge + "border-r-2"}><span className="pl-[2px]">滞在ホテル名</span></td>
        <td colSpan={9} />
      </Row>
      <Row n="16" h="h-[18px]">
        <td />
        <td colSpan={7} className={edge + "border-r-2 border-b-2 border-l-2"} />
        <td colSpan={9} />
      </Row>
    </tbody>
  </table>
);

const Handle = ({ className }) => <span className={"absolute size-[9px] rounded-[2px] border border-[#777] bg-white " + className} />;

const Document = () => (
  <div className="flex min-h-0 flex-1 bg-[#fafafa]">
    <main className="min-w-0 flex-1 overflow-hidden bg-[#ebebeb] px-[62px]">
      <div className="h-[1180px] border-x border-[#cfcfcf] bg-white px-[117px] pt-[58px]">
        <div className="relative h-[451px] border border-[#8a8a8a]">
          <div className="h-full overflow-hidden px-[22px] pt-[17px]">
            <div className="h-[480px] overflow-hidden rounded-t-[4px] bg-white shadow-[0_8px_28px_rgba(0,0,0,0.22)]">
              <MiniTitle />
              <MiniTabs />
              <MiniRibbon />
              <FormulaBar />
              <Sheet />
            </div>
          </div>
          <span className="absolute -top-7 -left-[2px] h-6 w-[2px] bg-[#a6a6a6]" />
          <span className="absolute -top-[5px] -left-[25px] h-[2px] w-6 bg-[#a6a6a6]" />
          <span className="absolute -top-7 -right-[2px] h-6 w-[2px] bg-[#a6a6a6]" />
          <span className="absolute -top-[5px] -right-[25px] h-[2px] w-6 bg-[#a6a6a6]" />
          <span className="absolute -top-[15px] left-1/2 h-3 w-px bg-[#8a8a8a]" />
          <Handle className="-top-[5px] -left-[5px]" />
          <Handle className="-top-[5px] left-1/2 -translate-x-1/2" />
          <Handle className="-top-[5px] -right-[5px]" />
          <Handle className="top-1/2 -left-[5px] -translate-y-1/2" />
          <Handle className="top-1/2 -right-[5px] -translate-y-1/2" />
          <span className="absolute -top-[27px] left-1/2 flex size-[13px] -translate-x-1/2 items-center justify-center rounded-full border border-[#777] bg-white">
            <svg viewBox="0 0 9 9" className="size-[9px]" fill="none" stroke="#444" strokeWidth="1.200" aria-hidden="true">
              <path d="M7.500 5.500A3.200 3.200 0 1 1 7 2.500M7.500.800v2.400H5" />
            </svg>
          </span>
        </div>
      </div>
    </main>
    <div className="w-[14px] shrink-0 border-l border-[#e4e4e4] pt-9 pl-[2px]">
      <div className="h-[133px] w-2 rounded-full bg-[#c1c1c1]" />
    </div>
  </div>
);

const StatusBar = () => (
  <footer className="flex h-6 shrink-0 items-center rounded-b-[4px] border-t border-[#a8a8a8] bg-gradient-to-b from-[#e3e3e3] to-[#d6d6d6] pl-6 text-[11px] whitespace-nowrap text-[#555]">
    <span>1/1 ページ</span>
    <span className="ml-6">0 文字</span>
    <button type="button" aria-label="校正" className="ml-5">
      <svg viewBox="0 0 16 14" className="h-[14px] w-4" fill="none" stroke="#555" aria-hidden="true">
        <path d="M8 2.500C6 1 3.500 1.500.5 1.500V12c3 0 5.500-.5 7.500 1 1-1 2-1.300 3.500-1.200M8 2.500V13M8 2.500C9.500 1.300 11 1.500 13 1.500V3M9.500 6l2 2.500 4-4.500" />
      </svg>
    </button>
    <button type="button" className="ml-[22px]">英語 (米国)</button>
    <button type="button" className="ml-auto flex items-center gap-[6px]">
      <svg viewBox="0 0 16 12" className="h-3 w-4" fill="none" stroke="#555" aria-hidden="true">
        <rect x=".5" y=".5" width="15" height="11" />
        <path d="M3 4.500V3h2M11 3h2v1.500M3 7.500V9h2M11 9h2V7.500" />
      </svg>
      フォーカス
    </button>
    <button type="button" aria-label="印刷レイアウト" className="ml-[10px] flex h-full w-[37px] items-center justify-center bg-[#a3a3a3]">
      <svg viewBox="0 0 16 14" className="h-[14px] w-4" stroke="#fff" aria-hidden="true">
        <path d="M1.500 1.500h13M1.500 3.500h13M1.500 5.500h13M1.500 7.500h13M1.500 9.500h13M1.500 11.500h13" />
      </svg>
    </button>
    <button type="button" aria-label="Webレイアウト" className="ml-[10px]">
      <svg viewBox="0 0 17 15" className="h-[15px] w-[17px]" fill="none" stroke="#555" aria-hidden="true">
        <path d="M1 .5h10.500V6M.5 11.500V.5M.5 11.500H6M2.500 3h7M2.500 5h7M2.500 7h5M2.500 9h4" />
        <circle cx="12" cy="10" r="4.500" fill="#555" stroke="none" />
        <path d="M9 8.500c2 0 2 1 2.500 2s-.5 2 0 3.500M13 6.500c-1 1.500 1 1.500 2.500 3" stroke="#ddd" />
      </svg>
    </button>
    <button type="button" aria-label="アウトライン" className="ml-[19px]">
      <svg viewBox="0 0 16 12" className="h-3 w-4" stroke="#555" aria-hidden="true">
        <path d="M0 1.500h2M3.500 1.500H14M3 4.500h2M7 4.500h7M5 7.500h2M8.500 7.500H16M3 10.500h2M7 10.500h8" />
      </svg>
    </button>
    <button type="button" aria-label="下書き" className="ml-[19px]">
      <svg viewBox="0 0 16 12" className="h-3 w-4" stroke="#555" aria-hidden="true">
        <path d="M1 1.500h14M1 4.500h10M1 7.500h14M1 10.500h9" />
      </svg>
    </button>
    <button type="button" aria-label="縮小" className="ml-[17px] h-[2px] w-2 bg-[#555]" />
    <input
      type="range"
      aria-label="ズーム"
      min="0"
      max="100"
      defaultValue="55"
      className="ml-[9px] h-3 w-[98px] appearance-none bg-transparent [&::-webkit-slider-runnable-track]:h-1 [&::-webkit-slider-runnable-track]:rounded-full [&::-webkit-slider-runnable-track]:bg-[#999] [&::-webkit-slider-thumb]:-mt-1 [&::-webkit-slider-thumb]:size-3 [&::-webkit-slider-thumb]:appearance-none [&::-webkit-slider-thumb]:rounded-full [&::-webkit-slider-thumb]:bg-white [&::-webkit-slider-thumb]:shadow-[0_0_2px_rgba(0,0,0,0.4)]"
    />
    <button type="button" aria-label="拡大" className="ml-[10px]">
      <svg viewBox="0 0 8 8" className="size-2" stroke="#555" strokeWidth="2" aria-hidden="true"><path d="M0 4h8M4 0v8" /></svg>
    </button>
    <span className="mr-6 ml-[13px] text-xs">140%</span>
  </footer>
);

export default function App() {
  return (
    <div lang="ja" className="flex h-screen flex-col overflow-hidden bg-white [font-family:Inter,'Noto_Sans_CJK_JP',sans-serif]">
      <div className="flex min-h-0 flex-1 flex-col overflow-hidden rounded-t-[5px]">
        <TitleBar />
        <TabRow />
        <Ribbon />
        <Document />
        <div className="h-[15px] shrink-0 border-t border-[#e2e2e2] bg-[#fafafa]" />
        <StatusBar />
      </div>
    </div>
  );
}
